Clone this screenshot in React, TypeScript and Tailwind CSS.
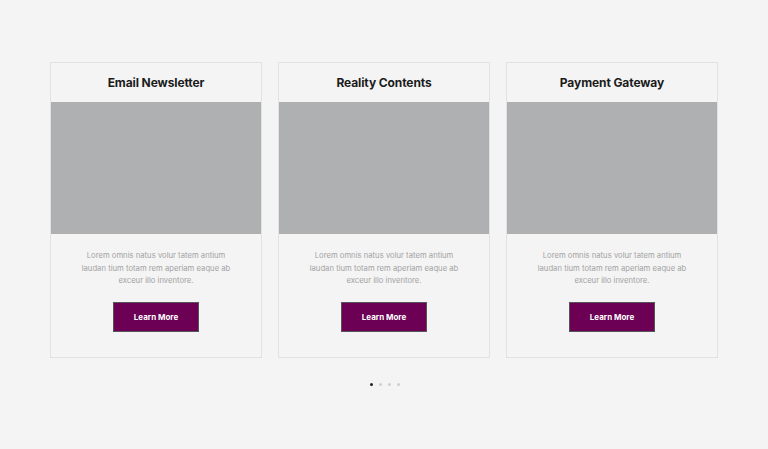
import React from "react";

const cards = ["Email Newsletter", "Reality Contents", "Payment Gateway"];

const Card: React.FC<{ title: string }> = ({ title }) => (
    <div className="flex flex-col border border-[#e2e2e2] bg-[#f4f4f4]">
        <h3 className="h-[39px] flex items-center justify-center text-[12px] font-bold tracking-[-0.1px] text-[#1b1b1b]">
            {title}
        </h3>
        <div className="h-[132px] bg-[#afb0b1]" />
        <div className="flex flex-col items-center pt-[16px] pb-[25px]">
            <p className="text-center whitespace-nowrap text-[7.7px] leading-[12.5px] text-[#a3a3a3]">
                Lorem omnis natus volur tatem antium
                <br />
                laudan tium totam rem aperiam eaque ab
                <br />
                exceur illo inventore.
            </p>
            <button className="mt-[14px] w-[86px] h-[30px] bg-[#6c0055] border border-[#555] text-white text-[8px] font-bold">
                Learn More
            </button>
        </div>
    </div>
);

export default function App() {
    return (
        <div className="min-h-[449px] bg-[#f4f4f4] pt-[62px] font-['Inter',sans-serif]">
            <div className="mx-auto w-[668px] grid grid-cols-3 gap-[16px]">
                {cards.map((c) => (
                    <Card key={c} title={c} />
                ))}
            </div>
            <div className="flex justify-center gap-[6px] mt-[25px] pl-[1px]">
                <span className="w-[3px] h-[3px] rounded-full bg-[#222]" />
                <span className="w-[3px] h-[3px] rounded-full bg-[#cfcfcf]" />
                <span className="w-[3px] h-[3px] rounded-full bg-[#cfcfcf]" />
                <span className="w-[3px] h-[3px] rounded-full bg-[#cfcfcf]" />
            </div>
        </div>
    );
}
